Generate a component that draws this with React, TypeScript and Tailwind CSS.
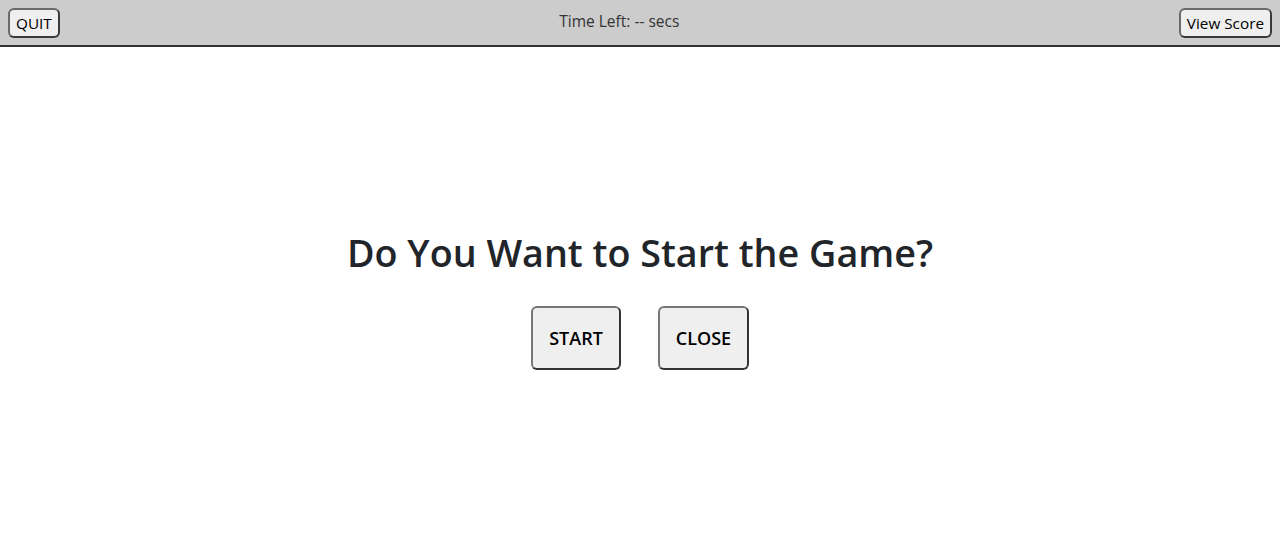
export default function App() {
  return (
    <div className="min-h-screen bg-white font-['Open_Sans',sans-serif]">
      {/* TOP BAR */}
      <div className="flex justify-between items-start h-[47px] bg-[#cccccc] border-b-2 border-[#333333] px-2 pt-2">
        <button className="h-[30px] px-[6px] text-[15.3px] text-black bg-[#efefef] rounded-md border-2 border-[#3a3a3a] border-t-[#6a6a6a] border-l-[#6a6a6a]">
          QUIT
        </button>

        <p className="text-[15.5px] leading-[26px] text-[#333333]">
          Time Left: -- secs
        </p>

        <button className="h-[30px] px-[6px] text-[15.3px] text-black bg-[#efefef] rounded-md border-2 border-[#3a3a3a] border-t-[#6a6a6a] border-l-[#6a6a6a]">
          View Score
        </button>
      </div>

      {/* PROMPT */}
      <div className="flex flex-col items-center pt-[180px]">
        <h1 className="text-[37.7px] leading-[52px] font-semibold text-[#212529]">
          Do You Want to Start the Game?
        </h1>

        <div className="flex gap-[37px] mt-[27px]">
          <button className="w-[90px] h-[64px] text-[18px] font-semibold text-black bg-[#efefef] rounded-md border-2 border-[#333333] border-t-[#777777] border-l-[#777777]">
            START
          </button>
          <button className="w-[91px] h-[64px] text-[18px] font-semibold text-black bg-[#efefef] rounded-md border-2 border-[#333333] border-t-[#777777] border-l-[#777777]">
            CLOSE
          </button>
        </div>
      </div>
    </div>
  );
}
